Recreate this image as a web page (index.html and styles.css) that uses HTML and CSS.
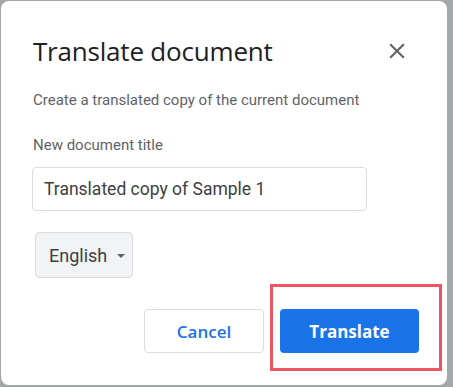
FILE: index.html
```html
<!DOCTYPE html>
<html lang="en">
<head>
  <meta charset="UTF-8">
  <meta name="viewport" content="width=device-width, initial-scale=1.0">
  <title>Translate document</title>
  <link rel="stylesheet" href="styles.css">
</head>
<body>
  <div class="dialog">
    <div class="header">
      <h1 class="title">Translate document</h1>
      <button class="close" aria-label="Close">
        <svg width="26" height="26" viewBox="0 0 24 24"><path d="M19 6.41L17.59 5 12 10.59 6.41 5 5 6.41 10.59 12 5 17.59 6.41 19 12 13.41 17.59 19 19 17.59 13.41 12z" fill="#5f6368"/></svg>
      </button>
    </div>

    <p class="subtitle">Create a translated copy of the current document</p>

    <label class="field-label" for="docTitle">New document title</label>
    <input class="field" type="text" id="docTitle" value="Translated copy of Sample 1">

    <div class="lang-select">
      <span>English</span>
      <span class="caret"></span>
    </div>

    <div class="actions">
      <button class="btn btn-cancel">Cancel</button>
      <button class="btn btn-primary">Translate<span class="highlight"></span></button>
    </div>
  </div>
</body>
</html>
```

FILE: styles.css
```css
html, body {
  margin: 0;
  height: 100%;
}
body {
  font-family: Roboto, "Liberation Sans", Arial, sans-serif;
  background-color: #a2a7a7;
  padding: 1px 6px 2px 1px;
  box-sizing: border-box;
}
.dialog {
  background-color: white;
  border-radius: 8px;
  height: 100%;
  box-sizing: border-box;
  padding: 30px 28px 0 32px;
}
.header {
  display: flex;
  justify-content: space-between;
  align-items: center;
}
.title {
  font-family: "Open Sans", Roboto, sans-serif;
  font-size: 26px;
  font-weight: 400;
  line-height: 40px;
  color: #202124;
  margin: 0;
  letter-spacing: -0.2px;
}
.close {
  background: none;
  border: none;
  padding: 0;
  margin-right: 9px;
  width: 26px;
  height: 26px;
  cursor: pointer;
}
.close svg {
  display: block;
}
.subtitle {
  font-size: 15px;
  color: #5f6368;
  margin: 19px 0 0;
  line-height: 20px;
}
.field-label {
  display: block;
  font-size: 15px;
  color: #5f6368;
  margin-top: 25px;
  line-height: 20px;
}
.field {
  display: block;
  width: 335px;
  height: 44px;
  margin: 12px 0 0 -1px;
  padding: 0 11px;
  border: 1px solid #dadce0;
  border-radius: 4px;
  font-family: inherit;
  font-size: 17.5px;
  color: #3c4043;
  box-sizing: border-box;
  outline: none;
}
.lang-select {
  display: inline-flex;
  align-items: center;
  margin: 21px 0 0 2px;
  height: 46px;
  width: 98px;
  padding: 0 0 0 13px;
  box-sizing: border-box;
  background-color: #f1f3f4;
  border: 1px solid #dadce0;
  border-radius: 4px;
  font-size: 18px;
  color: #3c4043;
}
.caret {
  margin-left: 10px;
  margin-top: 2px;
  border-left: 4px solid transparent;
  border-right: 4px solid transparent;
  border-top: 4px solid #5f6368;
}
.actions {
  display: flex;
  justify-content: flex-end;
  gap: 16px;
  margin-top: 31px;
}
.btn {
  height: 44px;
  border-radius: 4px;
  font-family: "Open Sans", Roboto, sans-serif;
  font-size: 17px;
  cursor: pointer;
}
.btn-cancel {
  width: 120px;
  background-color: white;
  border: 1px solid #dadce0;
  color: #1a73e8;
  font-weight: 600;
}
.btn-primary {
  position: relative;
  width: 139px;
  background-color: #1a73e8;
  border: none;
  color: white;
  font-weight: 700;
}
.highlight {
  position: absolute;
  left: -10px;
  right: -23px;
  top: -25px;
  bottom: -18px;
  border: 3px solid #ef5561;
  pointer-events: none;
}
```
